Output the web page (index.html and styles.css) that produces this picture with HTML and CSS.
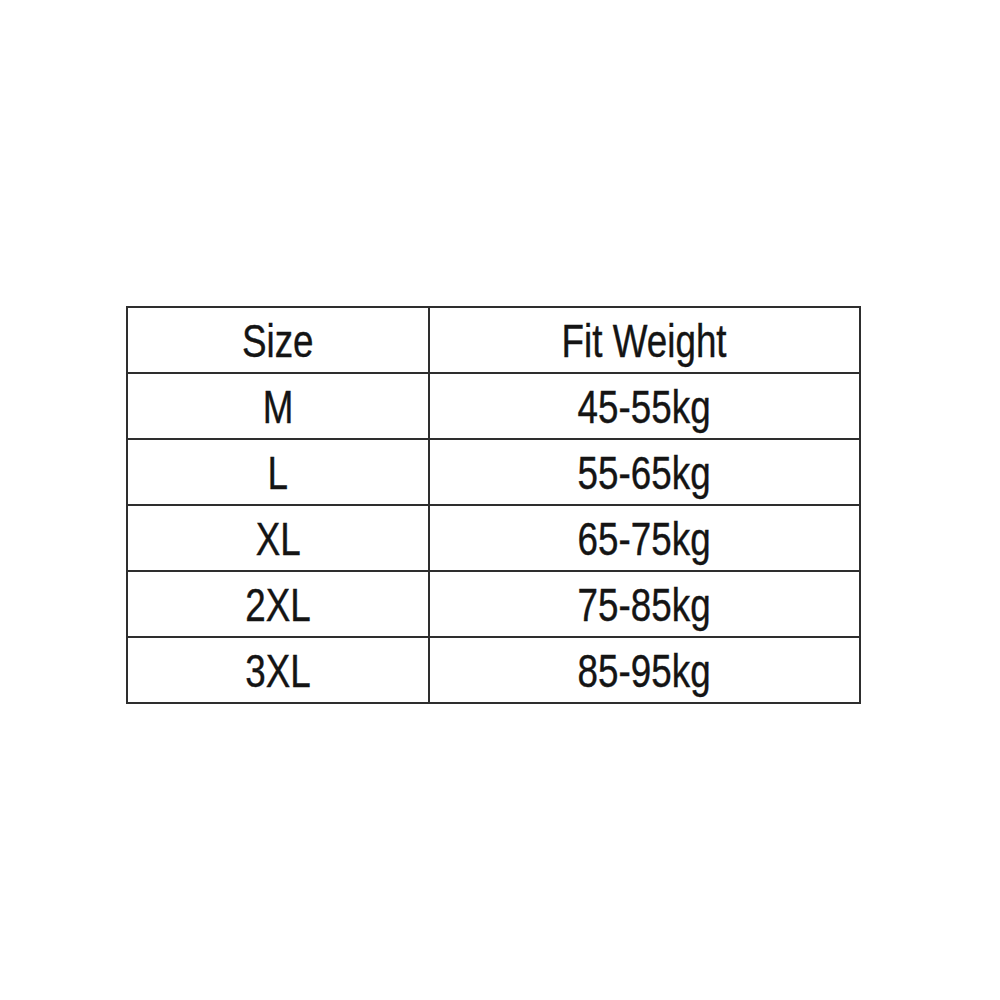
FILE: index.html
```html
<!DOCTYPE html>
<html>
<head>
<meta charset="utf-8">
<link rel="stylesheet" href="styles.css">
</head>
<body>
<div class="page">
  <div class="chart">
    <div class="cell"><span class="txt">Size</span></div>
    <div class="cell"><span class="txt">Fit Weight</span></div>
    <div class="cell"><span class="txt">M</span></div>
    <div class="cell"><span class="txt">45-55kg</span></div>
    <div class="cell"><span class="txt">L</span></div>
    <div class="cell"><span class="txt">55-65kg</span></div>
    <div class="cell"><span class="txt">XL</span></div>
    <div class="cell"><span class="txt">65-75kg</span></div>
    <div class="cell"><span class="txt">2XL</span></div>
    <div class="cell"><span class="txt">75-85kg</span></div>
    <div class="cell"><span class="txt">3XL</span></div>
    <div class="cell"><span class="txt">85-95kg</span></div>
  </div>
</div>
</body>
</html>
```
FILE: styles.css
```css
html, body {
  margin: 0;
  padding: 0;
  background: #ffffff;
}
.page {
  width: 1000px;
  height: 1000px;
  box-sizing: border-box;
  padding: 306px 0 0 126px;
  display: flex;
  align-items: flex-start;
}
.chart {
  display: grid;
  grid-template-columns: 300px 429px;
  grid-auto-rows: 64px;
  gap: 2px;
  padding: 2px;
  background: #2e2e2e;
}
.cell {
  background: #ffffff;
  display: flex;
  align-items: center;
  justify-content: center;
  font-family: "Liberation Sans", Arial, sans-serif;
  font-size: 46px;
  color: #141414;
  line-height: 1;
}
.txt {
  display: inline-block;
  transform: scaleX(0.8);
  margin-top: 2px;
  -webkit-text-stroke: 0.4px #141414;
}
```
